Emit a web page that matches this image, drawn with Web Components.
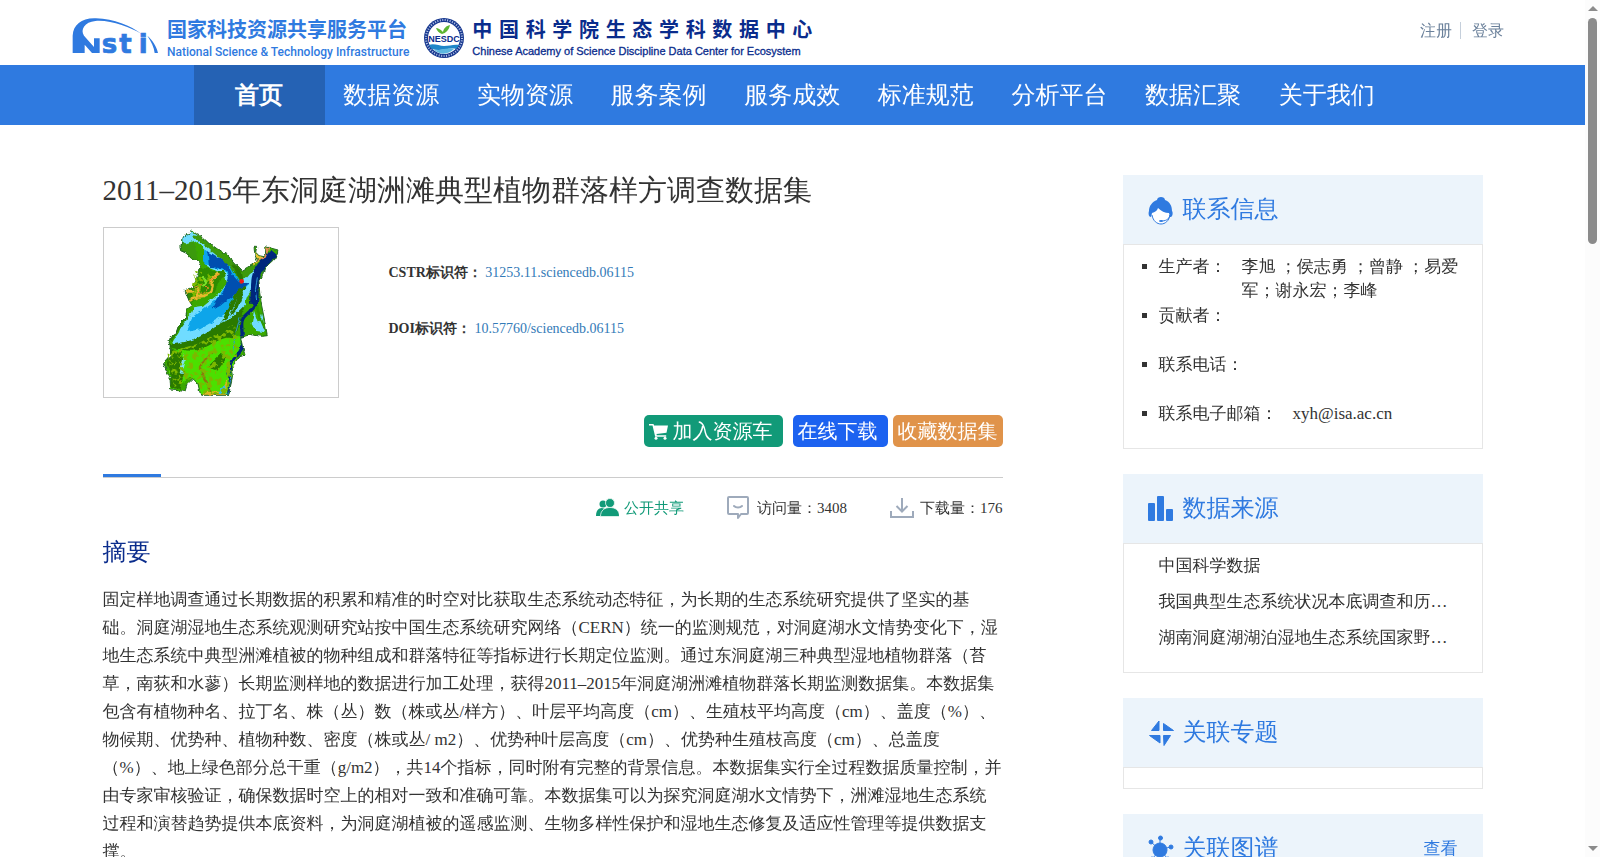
<!DOCTYPE html>
<html>
<head>
<meta charset="utf-8">
<title>2011–2015年东洞庭湖洲滩典型植物群落样方调查数据集</title>
<style>
    body {
        margin: 0;
        display: flex;
        height: 100vh;
        overflow: hidden;
        background: #fff;
        color: #333;
        font-family: "Liberation Serif", "WenQuanYi Zen Hei", "Noto Sans CJK SC", serif;
        font-size: 17px;
        line-height: 24px;
        --blue: #2f7ae0;
        --line: #e6e6e6;
        /* the named CJK face has no bold, the fallback one gets it synthesized */
        --bold-family: "Liberation Serif", serif;
    }
    .page {
        flex: 1;
        min-width: 0;
        overflow-y: auto;
        scrollbar-width: none;
    }
    .columns {
        display: flex;
        gap: 120px;
        max-width: 1380px;
        margin: 0 auto;
        padding: 50px 20px 40px;
    }
    dataset-detail {
        flex: 1;
        min-width: 0;
    }
    aside {
        flex: 0 0 360px;
        display: flex;
        flex-direction: column;
        gap: 25px;
    }
    ul {
        list-style: none;
        margin: 0;
        padding: 0;
    }
    .contacts {
        display: flex;
        flex-direction: column;
        gap: 1px;
        padding: 10px 20px 0 18px;
    }
    .contacts li:last-child {
        height: 46px;
    }
    .sources {
        padding: 4px 20px 16px 35px;
        line-height: 36px;
    }
    .sources a {
        display: block;
        color: inherit;
        text-decoration: none;
        white-space: nowrap;
    }
    .empty {
        height: 20px;
    }
    .more {
        color: var(--blue);
        text-decoration: none;
    }
</style>
</head>
<body>
<div class="page">
    <site-header></site-header>
    <site-nav></site-nav>
    <div class="columns">
        <dataset-detail>
            <span slot="title">2011–2015年东洞庭湖洲滩典型植物群落样方调查数据集</span>
            <id-row label="CSTR标识符：" value="31253.11.sciencedb.06115"></id-row>
            <id-row label="DOI标识符：" value="10.57760/sciencedb.06115"></id-row>
            <span slot="abstract">固定样地调查通过长期数据的积累和精准的时空对比获取生态系统动态特征，为长期的生态系统研究提供了坚实的基础。洞庭湖湿地生态系统观测研究站按中国生态系统研究网络（CERN）统一的监测规范，对洞庭湖水文情势变化下，湿地生态系统中典型洲滩植被的物种组成和群落特征等指标进行长期定位监测。通过东洞庭湖三种典型湿地植物群落（苔草，南荻和水蓼）长期监测样地的数据进行加工处理，获得2011–2015年洞庭湖洲滩植物群落长期监测数据集。本数据集包含有植物种名、拉丁名、株（丛）数（株或丛/样方）、叶层平均高度（cm）、生殖枝平均高度（cm）、盖度（%）、物候期、优势种、植物种数、密度（株或丛/ m2）、优势种叶层高度（cm）、优势种生殖枝高度（cm）、总盖度（%）、地上绿色部分总干重（g/m2），共14个指标，同时附有完整的背景信息。本数据集实行全过程数据质量控制，并由专家审核验证，确保数据时空上的相对一致和准确可靠。本数据集可以为探究洞庭湖水文情势下，洲滩湿地生态系统过程和演替趋势提供本底资料，为洞庭湖植被的遥感监测、生物多样性保护和湿地生态修复及适应性管理等提供数据支撑。</span>
        </dataset-detail>
        <aside>
            <side-panel icon="person" heading="联系信息">
                <ul class="contacts">
                    <li><contact-row label="生产者：">李旭 ；侯志勇 ；曾静 ；易爱军；谢永宏；李峰</contact-row></li>
                    <li><contact-row label="贡献者："></contact-row></li>
                    <li><contact-row label="联系电话："></contact-row></li>
                    <li><contact-row label="联系电子邮箱：">xyh@isa.ac.cn</contact-row></li>
                </ul>
            </side-panel>
            <side-panel icon="bars" heading="数据来源">
                <ul class="sources">
                    <li><a href="#">中国科学数据</a></li>
                    <li><a href="#">我国典型生态系统状况本底调查和历…</a></li>
                    <li><a href="#">湖南洞庭湖湖泊湿地生态系统国家野…</a></li>
                </ul>
            </side-panel>
            <side-panel icon="pinwheel" heading="关联专题">
                <div class="empty"></div>
            </side-panel>
            <side-panel icon="graph" heading="关联图谱">
                <a slot="action" class="more" href="#">查看</a>
                <div class="empty"></div>
            </side-panel>
        </aside>
    </div>
</div>
<page-scrollbar></page-scrollbar>

<script>
const ICONS = {
    person: `<svg width="26" height="30" viewBox="0 0 26 30">
        <circle cx="13" cy="20" r="9" fill="#fff"/>
        <path d="M13 2c2 0 4 1 4 3 5 2 7 6 7 11 1 1 1 5-1 6h-1l-1-4c-4 0-8-2-11-5-1 3-3 4-6 5l-1 4c-2 0-3-3-2-6 0-5 3-9 8-11 0-2 2-3 4-3z" fill="#2f7ae0"/>
        <path d="M4 20c1 6 5 9 9 9s8-3 9-9c-1 5-5 6-9 6" fill="none" stroke="#2f7ae0"/>
        <ellipse cx="13" cy="26" rx="2" ry="1" fill="#2f7ae0"/>
    </svg>`,
    bars: `<svg width="26" height="26" viewBox="0 0 26 26" fill="#2f7ae0">
        <rect x="0" y="7" width="7" height="18" rx="1"/>
        <rect x="9" y="0" width="7" height="25" rx="1"/>
        <rect x="18" y="13" width="7" height="12" rx="1"/>
    </svg>`,
    pinwheel: `<svg width="26" height="26" viewBox="0 0 26 26" fill="#2f7ae0" stroke="#2f7ae0" stroke-linejoin="round">
        <path d="M11 1v9.500H3.500zM15.500 3.500l10 7h-10zM1.500 15.500H12V23zM15.500 15.500h7L16 25.500z"/>
    </svg>`,
    graph: `<svg width="26" height="28" viewBox="0 0 26 28" fill="#2f7ae0" stroke="#2f7ae0">
        <path d="M12 15V3M12 15l10-3M12 15L3 7M12 15l8 9M12 15l-8 9"/>
        <circle cx="12" cy="15" r="7"/>
        <circle cx="12.500" cy="3" r="2"/><circle cx="23" cy="12" r="2"/><circle cx="3" cy="7" r="2"/>
        <circle cx="20" cy="24" r="2"/><circle cx="4" cy="24" r="2"/>
    </svg>`,
    cart: `<svg width="19" height="17" viewBox="0 0 19 17" fill="#fff">
        <path d="M0 1h4.500l.6 1.600H19l-1.500 7.200-10 1.200.3 1.200h9.400v1.600H6.200L3.500 2.600H0z"/>
        <circle cx="7" cy="15.300" r="1.500"/><circle cx="16" cy="15.300" r="1.500"/>
    </svg>`,
    users: `<svg width="23" height="20" viewBox="0 0 23 20" fill="#119a78">
        <circle cx="7" cy="6" r="3.500"/><path d="M0 18c0-5 2-8 6-8l3 1-4 7z"/>
        <g stroke="#ecf7f3" stroke-width=".8"><circle cx="14" cy="5" r="4.500"/><path d="M4.500 18.500c0-6 4-9 9.500-9s9.500 3 9.500 9z"/></g>
    </svg>`,
    visits: `<svg width="24" height="24" viewBox="0 0 24 24" fill="none" stroke="#9eaabb" stroke-width="2" stroke-linejoin="round" stroke-linecap="round">
        <path d="M2 1h18q1 0 1 1v15q0 1-1 1h-6l-3 4v-4H2q-1 0-1-1V2q0-1 1-1z"/><path d="M7 10c2 2 6 2 8 0"/>
    </svg>`,
    download: `<svg width="24" height="22" viewBox="0 0 24 22" fill="none" stroke="#9eaabb" stroke-width="2">
        <path d="M12 1v13M6.500 9l5.500 5.500L17.500 9M1 14v6h22v-6"/>
    </svg>`,
};

const NSTI_LOGO = `<svg width="88" height="38" viewBox="36 56 264 114" fill="#2f7ae0" role="img" aria-label="Nsti">
    <path d="M38 164V112C40 78 66 58 108 60c54 2 104 22 137 47C210 86 150 64 106 68 74 71 60 94 72 112l30 34V120h17v44H96L74 139v25z"/>
    <text x="125 178 236" y="163" font-family="DejaVu Sans" font-weight="bold" font-size="78" stroke="#2f7ae0" stroke-width="2">sti</text>
    <path d="M262 112c16 14 28 32 32 52h-10c-2-18-10-34-22-52z"/>
</svg>`;

const NESDC_LOGO = `<svg width="42" height="42" viewBox="0 0 42 42" role="img" aria-label="NESDC">
    <circle cx="21" cy="21" r="20" fill="#17388f"/>
    <circle cx="21" cy="21" r="18" fill="none" stroke="#b9c6e8" stroke-width="2" stroke-dasharray="1 1.500"/>
    <circle cx="21" cy="21" r="16" fill="#fff"/>
    <path d="M20 15c-3-3-5-4-7-4 1 3 3 5 6 6 4-1 7-4 8-9-4 1-6 3-7 7z" fill="#5cb531"/>
    <path d="M6 28c5-2 10 1 15 1s10-2 15-1c-1 2-2 3-3 4-7-2-15 3-24 0-1-1-2-2-3-4z" fill="#1e86c8"/>
    <path d="M11 33c6 1 12-3 20-1-6 6-14 6-20 1z" fill="#5cb7df"/>
    <text x="21" y="25" text-anchor="middle" font-family="Liberation Sans" font-weight="bold" font-size="9" fill="#0a2c8c">NESDC</text>
</svg>`;

// elevation map of the lake area
const REGION_MAP = `<svg width="120" height="167" viewBox="61 25 360 501" role="img" aria-label="洞庭湖区域图">
    <defs>
        <filter id="rough" x="-5%" y="-5%" width="110%" height="110%">
            <feTurbulence type="fractalNoise" baseFrequency=".06" numOctaves="3" seed="4"/>
            <feDisplacementMap in="SourceGraphic" scale="12" xChannelSelector="R" yChannelSelector="G"/>
        </filter>
        <filter id="speck" x="0" y="0" width="100%" height="100%">
            <feTurbulence type="fractalNoise" baseFrequency=".07" numOctaves="3" seed="9"/>
            <feColorMatrix values="0 0 0 0 .2  0 0 0 0 .48  0 0 0 0 0  9 0 0 0 -4.600"/>
            <feComposite in2="SourceGraphic" operator="in"/>
        </filter>
        <clipPath id="land"><path id="outline" d="M155 30l15 12 18 10 17 16 10 6 25 18 22 13 18 23 23 22 17-10 20-12 10-10-7-13-3-25h8l-3 15 10 10 15 3 8-10-3-20 15 4 22 6-2 12-12 18-13 12-13 12-7 23-10 20 2 30 5 35 10 50 8 45-15 2-35-5-12 3-18 5 5 25 8 28-15 5-13 17-13 15 3 30-7 30-3 24h-85l-8-34-17-14-15 14-7 22-43-4-2-38-20-40 22-25-2-30-6-20 23-15 10-30 20-20 5-25 15-10-10-15-12-30 27-10 10-35 10-25-10-20-20-8-8-12-22-10-3-15 8-5 2-20z"/></clipPath>
    </defs>
    <g filter="url(#rough)">
        <g clip-path="url(#land)">
            <path d="M60 20h360v510H60z" fill="#3aa800"/>
            <path d="M80 390l70-10 100-40 60 10-20 60-30 110H180l-30-50-60 40z" fill="#4be000"/>
            <path d="M125 45l30-12 25 20 25 22 40 35 30 20 30 40 25-25v-10l30-10-10 60-30 40-20 50-40 40-60 40-70 10-30 10-5-10 20-30 10-30 30-30 5-15 30-5 50-40 20-30-10-25-50-20-10-60-30-20-30 10z" fill="#6fdcff"/>
            <path d="M190 85l30 22 50 26 30 50 25 6-10 20-35 35-20 30-30 22-55 30-35 8 15-45 30-22 40-30 30-40 15-25-20-25-40-5-20-20z" fill="#08a5ea"/>
            <path d="M200 90l60 36 14 35 20 22 30 5-20 20-50 35-20 15-20 5 15-30 20-20 15-55-15-15-44-4z" fill="#0650b0"/>
            <path d="M85 370c60 0 120-30 160-70l20-50 30-45 20-10-5 50-10 60-20 50c-30-15-60 15-100 30-40 12-60 0-95-5z" fill="#2a7a00"/>
            <path d="M320 195l-30 40-25 50-30 25 40-20 40-40z" fill="#6fdcff"/>
            <path d="M300 208l8 10-20 50-22 25z" fill="#2a7a00"/>
            <path d="M90 385l30 10 10 60-10 50-30-4-2-50-10-20zM200 440l40-40 20 10-30 40z" fill="#2a7a00"/>
            <path d="M195 50l10 22 60 40 40 42 30-22 40-30 10 10-60 48-25 30-30-52-50-40-30-25-40-30z" fill="#3d9a08"/>
            <path d="M275 128l28 25 6 32-15-10z" fill="#2a7a00"/>
            <path d="M118 60l20 10 22-8 10 50-20 10-35-25z" fill="#3a9a10"/>
            <path d="M180 140l25 5 20 12 25-10 5 18-20 18-15 35-40 8-25 20-25-10 5-26 30-10 10-35z" fill="#2d8c00"/>
            <path d="M135 212l30 0 10-10-5 25 20-2 20-10 5-20-5-18 20-18M145 240l25-10" fill="none" stroke="#e8b92e" stroke-width="9"/>
            <path d="M160 200l30-10 12 12-8 12-22 6M205 190l8-18 22-10" fill="none" stroke="#e08328" stroke-width="3"/>
            <path d="M185 170l12 12-12 14" fill="none" stroke="#7be02a" stroke-width="7"/>
            <path d="M135 250l-5 45-22 30-20 30" fill="none" stroke="#2a8a00" stroke-width="16"/>
            <path d="M340 270l10 30 20 30-25 0-12-20zM365 280l8 55-30-5z" fill="#6fdcff"/>
            <path d="M310 350l40 0 32-5-30-70-10-80 10-50" fill="none" stroke="#2e9a00" stroke-width="7"/>
            <path d="M395 105c-25 20-50 30-50 70s8 50 0 75c-12 28-42 30-42 60 0 40 10 70-12 92-40 34-22 60-22 80l-6 45" fill="none" stroke="#00287c" stroke-width="10"/>
            <path d="M400 95c-30 35-52 45-56 85l-4 70" fill="none" stroke="#00287c" stroke-width="24"/>
            <path d="M350 170l-6 40 4 30M298 290l-14 50-8 55M262 440l8 30-6 54" fill="none" stroke="#2a9ad4" stroke-width="3"/>
            <path d="M335 138l40-32 10-32-14-2-26 26-8 22z" fill="#e9c62e"/>
            <path d="M350 120l25-12 8-28" fill="none" stroke="#e58a5a" stroke-width="5"/>
            <path d="M130 400l5 20-10 40-8-2 5-30z" fill="#7fe3ea"/>
            <path d="M215 395l-35 35 4 30 20 35 2 18" fill="none" stroke="#8a7a10" stroke-width="7"/>
            <path d="M180 524l20-14 40 4 20-40-4 50z" fill="#d8b322"/>
            <path d="M232 520l20-30 6 30z" fill="#36c0e0"/>
        </g>
        <use href="#outline" fill="none" stroke="#286a28" stroke-width="3"/>
    </g>
    <path d="M80 395l90-25 110-60 20 50-40 160H190l-30-50-60 30-12-60z" filter="url(#speck)"/>
    <path d="M160 150l60 10-20 60-50 10z" filter="url(#speck)"/>
    <circle cx="303" cy="182" r="7" fill="#f01818"/>
</svg>`;

class SiteHeader extends HTMLElement {
    connectedCallback() {
        this.attachShadow({ mode: 'open' }).innerHTML = `<style>
        :host {
            display: flex;
            align-items: flex-start;
            justify-content: space-between;
            height: 65px;
            padding: 0 81px 0 72px;
            box-sizing: border-box;
        }
        .brand {
            display: flex;
            color: #2f7ae0;
            text-decoration: none;
            padding-top: 17px;
        }
        .nesdc { color: #0a2c8c; margin-left: 14px; }
        .brands { display: flex; }
        .names { margin-left: 7px; }
        svg { overflow: visible; }
        b, small { display: block; white-space: nowrap; }
        b { font: bold 20px/24px "Noto Sans CJK SC", sans-serif; }
        small { font: 500 12px/22px Roboto, sans-serif; }
        .nesdc .names { min-width: 340px; }
        .nesdc b { text-align-last: justify; }
        .nesdc small {
            font: 11px/20px "Liberation Sans", sans-serif;
            -webkit-text-stroke: 0.3px;
        }
        .account {
            display: flex;
            padding-top: 22px;
            font-size: 16px;
            line-height: 17px;
        }
        .account a { color: #6b819b; text-decoration: none; }
        .account a + a { border-left: 1px solid #c5cfdb; margin-left: 8px; padding-left: 11px; }
        </style>
        <div class="brands">
            <a class="brand" href="#">${NSTI_LOGO}<span class="names"><b>国家科技资源共享服务平台</b><small>National Science &amp; Technology Infrastructure</small></span></a>
            <a class="brand nesdc" href="#">${NESDC_LOGO}<span class="names"><b>中国科学院生态学科数据中心</b><small>Chinese Academy of Science Discipline Data Center for Ecosystem</small></span></a>
        </div>
        <div class="account"><a href="#">注册</a><a href="#">登录</a></div>`;
    }
}

class SiteNav extends HTMLElement {
    _items = ['首页', '数据资源', '实物资源', '服务案例', '服务成效', '标准规范', '分析平台', '数据汇聚', '关于我们'];

    connectedCallback() {
        this.attachShadow({ mode: 'open' }).innerHTML = `<style>
        :host { display: block; background: var(--blue); }
        nav {
            display: flex;
            max-width: 1200px;
            margin: 0 auto;
            padding-left: 2px;
        }
        a {
            flex: 1;
            color: #fff;
            font-size: 24px;
            line-height: 60px;
            text-align: center;
            text-decoration: none;
            white-space: nowrap;
        }
        a:first-child {
            flex: 0 0 131px;
            background: #2562b4;
            font-family: var(--bold-family);
            font-weight: bold;
        }
        </style>
        <nav>${this._items.map(t => `<a href="#">${t}</a>`).join('')}</nav>`;
    }
}

class IdRow extends HTMLElement {
    connectedCallback() {
        this.attachShadow({ mode: 'open' }).innerHTML = `<style>
        :host { display: block; font-size: 14px; line-height: 20px; }
        b { font-family: var(--bold-family); }
        a { color: #337ab7; text-decoration: none; }
        </style>
        <b>${this.getAttribute('label')}</b> <a href="#">${this.getAttribute('value')}</a>`;
    }
}

class ActionButton extends HTMLElement {
    connectedCallback() {
        const icon = ICONS[this.getAttribute('icon')] || '';
        this.attachShadow({ mode: 'open' }).innerHTML = `<style>
        :host { display: block; }
        button {
            display: flex;
            align-items: center;
            gap: 5px;
            height: 32px;
            padding: 0 var(--pad-end, 5px) 0 5px;
            border: 0;
            border-radius: 5px;
            background: var(--fill);
            color: #fff;
            font: inherit;
            font-size: 20px;
            white-space: nowrap;
        }
        </style>
        <button type="button">${icon}<span><slot></slot></span></button>`;
    }
}

class StatItem extends HTMLElement {
    connectedCallback() {
        this.attachShadow({ mode: 'open' }).innerHTML = `<style>
        :host { display: flex; align-items: center; gap: 6px; font-size: 15px; }
        </style>
        ${ICONS[this.getAttribute('icon')]}<span><slot></slot></span>`;
    }
}

class DatasetDetail extends HTMLElement {
    connectedCallback() {
        this.attachShadow({ mode: 'open' }).innerHTML = `<style>
        :host { display: block; }
        h1, h2, p { margin: 0; font-weight: normal; }
        h1 { font-size: 29px; line-height: 30px; }
        .top { display: flex; gap: 50px; margin-top: 22px; }
        .thumb {
            display: flex;
            justify-content: center;
            width: 236px;
            height: 171px;
            border: 1px solid #ccc;
            box-sizing: border-box;
            padding-top: 1px;
        }
        .ids { display: flex; flex-direction: column; gap: 36px; padding-top: 36px; }
        .actions { display: flex; justify-content: flex-end; gap: 5px; margin-top: 17px; }
        .cart { --fill: #119a78; --pad-end: 10px; margin-right: 5px; }
        .get { --fill: #1c62f0; --pad-end: 10px; }
        .fav { --fill: #e0934a; }
        .rule { margin-top: 27px; border-bottom: 1px solid #ccc; }
        .rule::before { content: ""; display: block; width: 58px; height: 3px; background: var(--blue); }
        .stats { display: flex; justify-content: flex-end; gap: 43px; margin-top: 18px; }
        .open { color: #119a78; gap: 5px; }
        h2 { color: #0a2c8c; font-size: 24px; line-height: 32px; margin-top: 16px; }
        p { line-height: 28px; margin-top: 18px; }
        </style>
        <h1><slot name="title"></slot></h1>
        <div class="top">
            <div class="thumb">${REGION_MAP}</div>
            <div class="ids"><slot></slot></div>
        </div>
        <div class="actions">
            <action-button class="cart" icon="cart">加入资源车</action-button>
            <action-button class="get">在线下载</action-button>
            <action-button class="fav">收藏数据集</action-button>
        </div>
        <div class="rule"></div>
        <div class="stats">
            <stat-item class="open" icon="users">公开共享</stat-item>
            <stat-item icon="visits">访问量：3408</stat-item>
            <stat-item icon="download">下载量：176</stat-item>
        </div>
        <h2>摘要</h2>
        <p><slot name="abstract"></slot></p>`;
    }
}

class SidePanel extends HTMLElement {
    connectedCallback() {
        this.attachShadow({ mode: 'open' }).innerHTML = `<style>
        :host { display: block; }
        header {
            display: flex;
            align-items: center;
            gap: 9px;
            height: 69px;
            padding: 0 25px;
            background: #ecf4fb;
        }
        h3 {
            flex: 1;
            margin: 0;
            padding-bottom: 2px;
            color: var(--blue);
            font-size: 24px;
            font-weight: normal;
        }
        .body { border: 1px solid var(--line); }
        </style>
        <header>${ICONS[this.getAttribute('icon')]}<h3>${this.getAttribute('heading')}</h3><slot name="action"></slot></header>
        <div class="body"><slot></slot></div>`;
    }
}

class ContactRow extends HTMLElement {
    connectedCallback() {
        this.attachShadow({ mode: 'open' }).innerHTML = `<style>
        :host { display: flex; min-height: 48px; }
        :host::before {
            content: "";
            flex: 0 0 5px;
            height: 5px;
            margin: 9px 12px 0 0;
            background: #333;
        }
        .label { flex: none; margin-right: 15px; }
        </style>
        <span class="label">${this.getAttribute('label')}</span><span><slot></slot></span>`;
    }
}

class PageScrollbar extends HTMLElement {
    connectedCallback() {
        this.attachShadow({ mode: 'open' }).innerHTML = `<style>
        :host {
            flex: 0 0 15px;
            display: flex;
            flex-direction: column;
            align-items: center;
            gap: 7px;
            padding: 6px 0;
            box-sizing: border-box;
            background: #fcfcfc;
        }
        .track { flex: 1; }
        .thumb { width: 9px; height: 27.5%; min-height: 20px; border-radius: 5px; background: #8b8b8b; }
        </style>
        <svg width="10" height="5"><path d="M0 5l5-5 5 5z" fill="#8b8b8b"/></svg>
        <div class="track"><div class="thumb"></div></div>
        <svg width="10" height="5"><path d="M0 0l5 5 5-5z" fill="#8b8b8b"/></svg>`;
        const page = document.querySelector('.page');
        const thumb = this.shadowRoot.querySelector('.thumb');
        page.addEventListener('scroll', () => {
            const room = thumb.parentElement.clientHeight - thumb.clientHeight;
            const range = page.scrollHeight - page.clientHeight;
            thumb.style.marginTop = `${room * page.scrollTop / range}px`;
        });
    }
}

customElements.define('site-header', SiteHeader);
customElements.define('site-nav', SiteNav);
customElements.define('id-row', IdRow);
customElements.define('action-button', ActionButton);
customElements.define('stat-item', StatItem);
customElements.define('dataset-detail', DatasetDetail);
customElements.define('side-panel', SidePanel);
customElements.define('contact-row', ContactRow);
customElements.define('page-scrollbar', PageScrollbar);
</script>
</body>
</html>
